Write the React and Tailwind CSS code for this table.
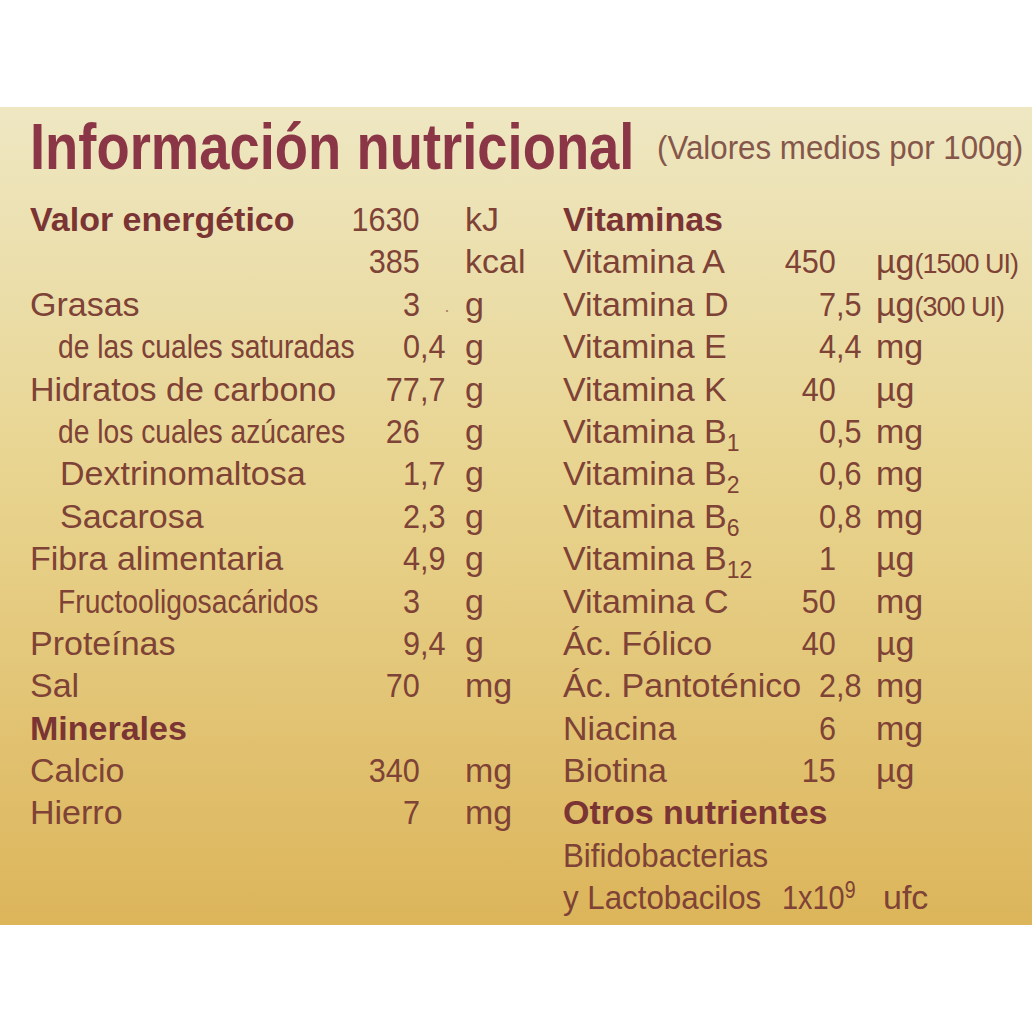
import React from "react";

const left = [
  { label: "Valor energético", bold: true, int: "1630", unit: "kJ" },
  { label: "", int: "385", unit: "kcal" },
  { label: "Grasas", int: "3", frac: "·", unit: "g", speck: true },
  { label: "de las cuales saturadas", narrow: true, int: "0", frac: ",4", unit: "g" },
  { label: "Hidratos de carbono", int: "77", frac: ",7", unit: "g" },
  { label: "de los cuales azúcares", narrow: true, int: "26", unit: "g" },
  { label: "Dextrinomaltosa", indent: true, int: "1", frac: ",7", unit: "g" },
  { label: "Sacarosa", indent: true, int: "2", frac: ",3", unit: "g" },
  { label: "Fibra alimentaria", int: "4", frac: ",9", unit: "g" },
  { label: "Fructooligosacáridos", narrow: true, int: "3", unit: "g" },
  { label: "Proteínas", int: "9", frac: ",4", unit: "g" },
  { label: "Sal", int: "70", unit: "mg" },
  { label: "Minerales", bold: true },
  { label: "Calcio", int: "340", unit: "mg" },
  { label: "Hierro", int: "7", unit: "mg" },
];

const right = [
  { label: "Vitaminas", bold: true },
  { label: "Vitamina A", int: "450", unit: "µg", note: "(1500 UI)" },
  { label: "Vitamina D", int: "7", frac: ",5", unit: "µg", note: "(300 UI)" },
  { label: "Vitamina E", int: "4", frac: ",4", unit: "mg" },
  { label: "Vitamina K", int: "40", unit: "µg" },
  { label: "Vitamina B", sub: "1", int: "0", frac: ",5", unit: "mg" },
  { label: "Vitamina B", sub: "2", int: "0", frac: ",6", unit: "mg" },
  { label: "Vitamina B", sub: "6", int: "0", frac: ",8", unit: "mg" },
  { label: "Vitamina B", sub: "12", int: "1", unit: "µg" },
  { label: "Vitamina C", int: "50", unit: "mg" },
  { label: "Ác. Fólico", int: "40", unit: "µg" },
  { label: "Ác. Pantoténico", int: "2", frac: ",8", unit: "mg" },
  { label: "Niacina", int: "6", unit: "mg" },
  { label: "Biotina", int: "15", unit: "µg" },
  { label: "Otros nutrientes", bold: true },
];

function Label({ row }) {
  if (row.bold) return <span className="font-bold text-[#7b3434] whitespace-nowrap">{row.label}</span>;
  if (row.narrow)
    return (
      <span className="pl-[28px]">
        <span className="inline-block origin-left scale-x-[0.83] whitespace-nowrap">{row.label}</span>
      </span>
    );
  return (
    <span className={row.indent ? "pl-[30px] whitespace-nowrap" : "whitespace-nowrap"}>
      {row.label}
      {row.sub && <span className="text-[23px] leading-none align-[-8px]">{row.sub}</span>}
    </span>
  );
}

function LeftRow({ row }) {
  return (
    <div className="flex h-[42.4px] leading-[42.4px]">
      <div className="w-[310px] shrink-0">
        <Label row={row} />
      </div>
      <div className="w-[80px] shrink-0 text-right">
        <span className="inline-block origin-right scale-x-[0.9]">{row.int}</span>
      </div>
      <div className="w-[45px] shrink-0">
        {row.speck ? (
          <span className="pl-[24px] text-[18px] opacity-60">{row.frac}</span>
        ) : (
          <span className="inline-block origin-left scale-x-[0.9]">{row.frac}</span>
        )}
      </div>
      <div>{row.unit}</div>
    </div>
  );
}

function RightRow({ row }) {
  return (
    <div className="flex h-[42.4px] leading-[42.4px] whitespace-nowrap">
      <div className="w-[200px] shrink-0">
        <Label row={row} />
      </div>
      <div className="w-[73px] shrink-0 text-right">
        <span className="inline-block origin-right scale-x-[0.9]">{row.int}</span>
      </div>
      <div className="w-[40px] shrink-0">
        <span className="inline-block origin-left scale-x-[0.9]">{row.frac}</span>
      </div>
      <div>
        {row.unit}
        {row.note && <span className="text-[27px] tracking-[-1px]">{row.note}</span>}
      </div>
    </div>
  );
}

export default function App() {
  return (
    <div className="w-[1032px] h-[1032px] bg-white font-['Liberation_Sans',Arial,sans-serif] text-[34px] text-[#7e4236]">
      <div className="h-[107px]" />
      <div className="h-[818px] bg-linear-to-b from-[#eee7c2] via-[#e8d48f] via-45% to-[#dcb55a] pl-[30px] pt-[8px]">
        <div className="flex items-end">
          <div className="w-[605px] shrink-0">
            <span className="inline-block origin-left scale-x-[0.85] whitespace-nowrap text-[64px] leading-none font-bold text-[#8a3646]">
              Información nutricional
            </span>
          </div>
          <div className="ml-[22px] mb-[10px]">
            <span className="inline-block origin-left scale-x-[0.92] whitespace-nowrap text-[34px] leading-none text-[#85574a]">
              (Valores medios por 100g)
            </span>
          </div>
        </div>

        <div className="mt-[15px] grid grid-cols-[533px_1fr]">
          <div>
            {left.map((r, i) => (
              <LeftRow key={i} row={r} />
            ))}
          </div>
          <div>
            {right.map((r, i) => (
              <RightRow key={i} row={r} />
            ))}
            <div className="h-[42.4px] leading-[42.4px]">
              <span className="inline-block origin-left scale-x-[0.92] whitespace-nowrap">Bifidobacterias</span>
            </div>
            <div className="flex h-[42.4px] leading-[42.4px] whitespace-nowrap">
              <div className="w-[219px] shrink-0">
                <span className="inline-block origin-left scale-x-[0.92]">y Lactobacilos</span>
              </div>
              <div className="w-[101px] shrink-0">
                <span className="inline-block origin-left scale-x-[0.85]">
                  1x10<span className="text-[23px] leading-none align-[11px]">9</span>
                </span>
              </div>
              <div>ufc</div>
            </div>
          </div>
        </div>
      </div>
    </div>
  );
}
